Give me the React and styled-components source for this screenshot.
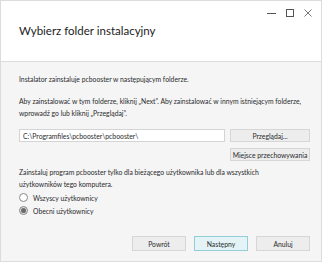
import React from "react";
import styled, { createGlobalStyle } from "styled-components";

const Global = createGlobalStyle`
  html, body { margin: 0; padding: 0; background: #ffffff; }
  body { font-family: Lato, "Noto Sans", sans-serif; color: #2b2b2b; }
  * { box-sizing: border-box; }
`;

const Window = styled.div`
  width: 322px;
  height: 262px;
  border: 1px solid #dcdcdc;
  background: #f5f5f6;
  display: flex;
  flex-direction: column;
`;

const Header = styled.header`
  height: 61px;
  background: #ffffff;
  border-bottom: 1px solid #dcdcdc;
  display: flex;
  flex-direction: column;
  padding: 7px 9px 0 18px;
`;

const Controls = styled.div`
  display: flex;
  justify-content: flex-end;
  align-items: center;
  gap: 10px;
  height: 10px;
`;

const Title = styled.h1`
  margin: 5px 0 0 0;
  font-size: 11.5px;
  font-weight: 400;
  line-height: 16px;
  color: #222;
`;

const Body = styled.main`
  flex: 1;
  display: flex;
  flex-direction: column;
  padding: 11px 11px 10px 18px;
  font-size: 6.8px;
  line-height: 12px;
`;

const Para = styled.p`
  margin: 0 0 ${(p) => p.$mb || 0}px 0;
  max-width: ${(p) => p.$max || "none"};
`;

const Row = styled.div`
  display: flex;
  gap: 5px;
  align-items: center;
  justify-content: ${(p) => (p.$end ? "flex-end" : "flex-start")};
  margin-bottom: ${(p) => p.$mb || 0}px;
`;

const PathInput = styled.div`
  flex: 1;
  height: 13px;
  background: #fff;
  border: 1px solid #d4d4d4;
  padding: 0 3px;
  display: flex;
  align-items: center;
`;

const Button = styled.button`
  width: ${(p) => p.$w || 80}px;
  height: ${(p) => p.$h || 13}px;
  padding: 0;
  font-family: inherit;
  font-size: 6.8px;
  white-space: nowrap;
  color: #2b2b2b;
  background: ${(p) => (p.$primary ? "#e4f3f6" : "#ededee")};
  border: 1px solid ${(p) => (p.$primary ? "#93cdd8" : "#d6d6d6")};
  border-radius: 0;
`;

const Radio = styled.label`
  display: flex;
  align-items: center;
  gap: 5px;
  height: 13px;
`;

const Circle = styled.span`
  width: 9px;
  height: 9px;
  border-radius: 50%;
  border: 1px solid #8a8a8a;
  background: ${(p) => (p.$on ? "#dcdcdc" : "#fff")};
  display: flex;
  align-items: center;
  justify-content: center;
  &::after {
    content: "";
    width: 5px;
    height: 5px;
    border-radius: 50%;
    background: ${(p) => (p.$on ? "#6a6a6a" : "transparent")};
  }
`;

const Spacer = styled.div`
  flex: 1;
`;

const Footer = styled.div`
  display: flex;
  justify-content: flex-end;
  gap: 8px;
`;

export default function App() {
  return (
    <>
      <Global />
      <Window>
        <Header>
          <Controls>
            <svg width="9" height="9" viewBox="0 0 9 9"><path d="M0 4.5H9" stroke="#555" strokeWidth="1" /></svg>
            <svg width="8" height="8" viewBox="0 0 8 8"><rect x="0.5" y="0.5" width="7" height="7" fill="none" stroke="#555" strokeWidth="1" /></svg>
            <svg width="8" height="8" viewBox="0 0 8 8"><path d="M0.5 0.5L7.5 7.5M7.5 0.5L0.5 7.5" stroke="#666" strokeWidth="0.9" /></svg>
          </Controls>
          <Title>Wybierz folder instalacyjny</Title>
        </Header>
        <Body>
          <Para $mb={10}>Instalator zainstaluje pcbooster w następującym folderze.</Para>
          <Para $mb={10}>
            Aby zainstalować w tym folderze, kliknij „Next”. Aby zainstalować w innym istniejącym folderze, wprowadź go lub kliknij „Przeglądaj”.
          </Para>
          <Row $mb={6}>
            <PathInput>C:\Programfiles\pcbooster\pcbooster\</PathInput>
            <Button $w={80}>Przeglądaj...</Button>
          </Row>
          <Row $end $mb={5}>
            <Button $w={80}>Miejsce przechowywania</Button>
          </Row>
          <Para $max="250px" $mb={1}>Zainstaluj program pcbooster tylko dla bieżącego użytkownika lub dla wszystkich użytkowników tego komputera.</Para>
          <Radio><Circle /> Wszyscy użytkownicy</Radio>
          <Radio><Circle $on /> Obecni użytkownicy</Radio>
          <Spacer />
          <Footer>
            <Button $w={54} $h={15}>Powrót</Button>
            <Button $w={54} $h={15} $primary>Następny</Button>
            <Button $w={54} $h={15}>Anuluj</Button>
          </Footer>
        </Body>
      </Window>
    </>
  );
}
